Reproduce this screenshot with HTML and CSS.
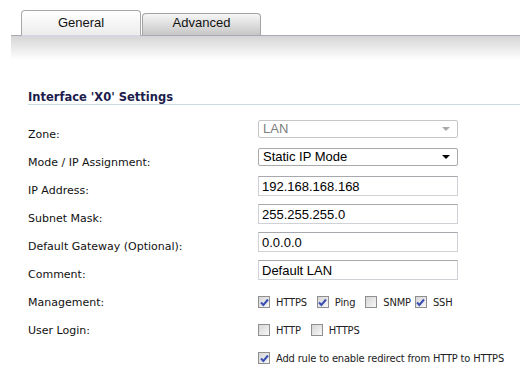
FILE: index.html
```html
<!DOCTYPE html>
<html lang="en">
<head>
    <meta charset="UTF-8">
    <meta name="viewport" content="width=device-width, initial-scale=1.0">
    <title>Interface Settings</title>
    <link rel="stylesheet" href="styles.css">
</head>
<body>
    <div class="tabs">
        <div class="tab active">General</div>
        <div class="tab">Advanced</div>
    </div>
    <div class="band"></div>

    <div class="section">
        <div class="section-title">Interface 'X0' Settings</div>

        <div class="row">
            <div class="label">Zone:</div>
            <div class="select disabled">LAN<span class="arrow"></span></div>
        </div>
        <div class="row">
            <div class="label">Mode / IP Assignment:</div>
            <div class="select">Static IP Mode<span class="arrow"></span></div>
        </div>
        <div class="row">
            <div class="label">IP Address:</div>
            <input class="text" type="text" value="192.168.168.168">
        </div>
        <div class="row">
            <div class="label">Subnet Mask:</div>
            <input class="text" type="text" value="255.255.255.0">
        </div>
        <div class="row">
            <div class="label">Default Gateway (Optional):</div>
            <input class="text" type="text" value="0.0.0.0">
        </div>
        <div class="row">
            <div class="label">Comment:</div>
            <input class="text" type="text" value="Default LAN">
        </div>
        <div class="row">
            <div class="label">Management:</div>
            <div class="checks">
                <label class="check"><span class="box on"><svg width="9" height="9" viewBox="0 0 9 9"><path d="M1 4.5 L3.4 7 L8 1.5" /></svg></span>HTTPS</label>
                <label class="check"><span class="box on"><svg width="9" height="9" viewBox="0 0 9 9"><path d="M1 4.5 L3.4 7 L8 1.5" /></svg></span>Ping</label>
                <label class="check tight"><span class="box"></span>SNMP</label>
                <label class="check"><span class="box on"><svg width="9" height="9" viewBox="0 0 9 9"><path d="M1 4.5 L3.4 7 L8 1.5" /></svg></span>SSH</label>
            </div>
        </div>
        <div class="row">
            <div class="label">User Login:</div>
            <div class="checks">
                <label class="check"><span class="box"></span>HTTP</label>
                <label class="check"><span class="box"></span>HTTPS</label>
            </div>
        </div>
        <div class="row">
            <div class="label"></div>
            <div class="checks">
                <label class="check"><span class="box on"><svg width="9" height="9" viewBox="0 0 9 9"><path d="M1 4.5 L3.4 7 L8 1.5" /></svg></span>Add rule to enable redirect from HTTP to HTTPS</label>
            </div>
        </div>
    </div>
</body>
</html>
```

FILE: styles.css
```css
body {
    margin: 0;
    background-color: #fff;
    font-family: "DejaVu Sans", sans-serif;
    font-size: 11px;
    color: #111;
}
.tabs {
    margin-left: 11px;
    padding-left: 10px;
    height: 35px;
    border-bottom: 1px solid #a9a9b4;
    display: flex;
    align-items: flex-end;
    gap: 1px;
}
.tab {
    box-sizing: border-box;
    width: 119px;
    height: 22px;
    padding-top: 1px;
    border: 1px solid #a3a3a3;
    border-bottom: none;
    border-radius: 4px 4px 0 0;
    background: linear-gradient(#f6f6f6, #c6c6c6);
    font-family: "Liberation Sans", Arial, sans-serif;
    font-size: 13px;
    line-height: 15px;
    text-align: center;
    color: #111;
}
.tab.active {
    width: 120px;
    height: 26px;
    margin-bottom: -1px;
    padding-top: 4px;
    border-color: #a8a8a8;
    border-bottom: 1px solid #d4d4ec;
    background: linear-gradient(#ffffff, #ececec);
}
.band {
    margin-left: 11px;
    height: 24px;
    background: linear-gradient(#d5d5d5, #ffffff);
}
.section {
    padding-left: 28px;
}
.section-title {
    margin-top: 30px;
    margin-bottom: 14px;
    line-height: 14px;
    font-size: 11.5px;
    font-weight: bold;
    color: #1c1c4c;
    border-bottom: 1px solid #ccdbe2;
}
.row {
    display: flex;
    height: 28px;
}
.label {
    flex: none;
    width: 230px;
    padding-top: 6px;
    line-height: 20px;
    color: #111;
}
.select {
    position: relative;
    box-sizing: border-box;
    width: 200px;
    height: 18px;
    margin-top: 1px;
    padding-left: 4px;
    border: 1px solid #a9a9a9;
    border-radius: 2px;
    font-family: "Liberation Sans", Arial, sans-serif;
    font-size: 13px;
    line-height: 16px;
    color: #000;
}
.select .arrow {
    position: absolute;
    right: 7px;
    top: 6px;
    border-left: 4px solid transparent;
    border-right: 4px solid transparent;
    border-top: 4px solid #000;
}
.select.disabled {
    border-color: #c6c6c6;
    color: #7d7d7d;
}
.select.disabled .arrow {
    border-top-color: #aaa;
}
.text {
    box-sizing: border-box;
    width: 200px;
    height: 20px;
    margin: 1px 0 0 0;
    padding: 0 3px;
    border: 1px solid #cfd1d6;
    border-top-color: #a7a9ae;
    font-family: "Liberation Sans", Arial, sans-serif;
    font-size: 13px;
    color: #000;
    outline: none;
}
.checks {
    display: flex;
    align-items: center;
    height: 28px;
    padding-top: 1px;
    font-family: "DejaVu Sans Condensed", "DejaVu Sans", sans-serif;
    letter-spacing: -0.15px;
    white-space: nowrap;
}
.check {
    display: flex;
    align-items: center;
    margin-right: 10px;
    color: #222;
}
.check.tight {
    margin-right: 4px;
}
.box {
    box-sizing: border-box;
    width: 12px;
    height: 12px;
    margin-right: 6px;
    border: 1px solid #8f8f8f;
    background: linear-gradient(135deg, #d6d6d6, #f7f7f7);
    display: flex;
    align-items: center;
    justify-content: center;
}
.box svg path {
    fill: none;
    stroke: #3b4fb2;
    stroke-width: 2;
}
```
